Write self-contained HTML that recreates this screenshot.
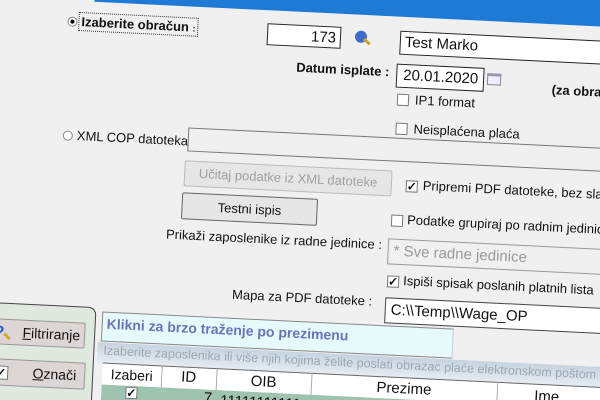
<!DOCTYPE html>
<html><head><meta charset="utf-8"><style>
html,body{margin:0;padding:0;width:600px;height:400px;overflow:hidden;background:#f0f0f0;}
#clip{position:relative;width:600px;height:400px;overflow:hidden;}
#w{position:absolute;left:-100px;top:-100px;width:800px;height:600px;background:#f0f0f0;transform-origin:400px 300px;transform:rotate(2.8deg);font-family:"Liberation Sans",Arial,sans-serif;font-size:13px;color:#111;}
.a{position:absolute;white-space:nowrap;}
.box{position:absolute;background:#fff;border:1px solid #555;box-sizing:border-box;}
.btn{position:absolute;background:#e6e6e6;border:1px solid #8a8a8a;box-sizing:border-box;text-align:center;border-radius:2px;}
.cb{position:absolute;width:12px;height:12px;border:1px solid #777;background:#fff;box-sizing:border-box;font-size:12px;line-height:10px;text-align:center;font-weight:bold;}
.rd{position:absolute;width:10px;height:10px;border-radius:50%;border:1px solid #888;background:#fff;box-sizing:border-box;}
</style></head><body><div id="clip"><div id="w">
<div class="a" style="left:185px;top:60px;width:700px;height:52px;background:#1f7ad6;"></div>
<div class="rd" style="left:159px;top:128px;"><div style="position:absolute;left:2px;top:2px;width:4px;height:4px;border-radius:50%;background:#000"></div></div>
<div class="a" style="left:170px;top:123px;border:1px dotted #333;padding:1px 2px;font-weight:bold;font-size:13px;">Izaberite obračun <span style="font-size:9px">:</span></div>
<div class="box" style="left:359px;top:125px;width:74px;height:22px;text-align:right;padding:2px 4px;font-size:15px;border-color:#222">173</div>
<div class="a" style="left:447px;top:128px;width:12px;height:12px;border-radius:50%;background:#3d6bd0;"></div>
<div class="a" style="left:455px;top:137px;width:8px;height:3px;background:#c9a233;transform:rotate(40deg)"></div>
<div class="box" style="left:492px;top:126px;width:260px;height:24px;padding:2px 4px;font-size:15px;border-color:#222">Test Marko</div>
<div class="a" style="left:380px;top:160px;width:103px;text-align:right;font-weight:bold;">Datum isplate :</div>
<div class="box" style="left:490px;top:159px;width:88px;height:24px;padding:2px 6px;font-size:15px;border-color:#222">20.01.2020</div>
<div class="a" style="left:581px;top:164px;width:14px;height:12px;border:1px solid #889;background:#eef;box-sizing:border-box;border-top:3px solid #99a;"></div>
<div class="a" style="left:646px;top:170px;font-weight:bold;">(za obračun</div>
<div class="cb" style="left:492px;top:189px;"></div>
<div class="a" style="left:510px;top:187px;">IP1 format</div>
<div class="cb" style="left:492px;top:218px;"></div>
<div class="a" style="left:510px;top:216px;">Neisplaćena plaća</div>
<div class="rd" style="left:160px;top:242px;"></div>
<div class="a" style="left:174px;top:239px;">XML COP datoteka</div>
<div class="box" style="left:285px;top:233px;width:520px;height:24px;background:#f0f0f0;border-color:#777"></div>
<div class="btn" style="left:283px;top:266px;width:208px;height:26px;line-height:24px;color:#a0a0a0;border-color:#bbb">Učitaj podatke iz XML datoteke</div>
<div class="cb" style="left:505px;top:275px;">✓</div>
<div class="a" style="left:522px;top:272px;">Pripremi PDF datoteke, bez slanja</div>
<div class="btn" style="left:282px;top:298px;width:136px;height:27px;line-height:25px;border-color:#666">Testni ispis</div>
<div class="cb" style="left:492px;top:310px;"></div>
<div class="a" style="left:508px;top:307px;">Podatke grupiraj po radnim jedinicama</div>
<div class="a" style="left:264px;top:333px;width:220px;text-align:right;">Prikaži zaposlenike iz radne jedinice :</div>
<div class="box" style="left:490px;top:334px;width:260px;height:26px;background:#f0f0f0;border-color:#999;color:#999;padding:3px 5px;font-size:15px;">* Sve radne jedinice</div>
<div class="cb" style="left:491px;top:371px;">✓</div>
<div class="a" style="left:507px;top:368px;">Ispiši spisak poslanih platnih lista</div>
<div class="a" style="left:300px;top:390px;width:177px;text-align:right;">Mapa za PDF datoteke :</div>
<div class="box" style="left:490px;top:393px;width:260px;height:26px;padding:3px 5px;font-size:15px;border-color:#444">C:\\Temp\\Wage_OP</div>
<div class="a" style="left:60px;top:417px;width:142px;height:200px;background:#dfe9dd;border:1px solid #444;border-radius:0 8px 0 0;box-sizing:border-box;"></div>
<div class="btn" style="left:88px;top:433px;width:104px;height:26px;line-height:24px;background:#ddd6d4;text-align:right;padding-right:4px;border-color:#999;font-size:14px"><span style="position:absolute;left:12px;top:1px;color:#2d5fc4;font-weight:bold;font-size:17px">?</span><span style="position:absolute;left:21px;top:15px;width:8px;height:3px;background:#d4a937;transform:rotate(45deg)"></span><u>F</u>iltriranje</div>
<div class="btn" style="left:90px;top:473px;width:104px;height:27px;line-height:25px;background:#ddd6d4;text-align:right;padding-right:8px;border-color:#999;font-size:14px"><span class="cb" style="left:12px;top:6px;width:14px;height:14px;line-height:12px;">✓</span><u>O</u>znači</div>
<div class="a" style="left:208px;top:421px;width:352px;height:30px;background:#e6f9fb;border:1px solid #888;border-right-color:#ccc;box-sizing:border-box;color:#6a72c0;font-weight:bold;font-size:14px;padding:3px 4px;">Klikni za brzo traženje po prezimenu</div>
<div class="a" style="left:205px;top:452px;width:600px;height:20px;background:linear-gradient(#c6d3df,#e8eef3);color:#9ea6ae;padding:1px 6px;font-size:12.5px;">Izaberite zaposlenika ili više njih kojima želite poslati obrazac plaće elektronskom poštom</div>
<div class="a" style="left:211px;top:472px;width:600px;height:22px;background:#fff;border-top:1px solid #666;"></div>
<div class="a" style="left:211px;top:472px;width:59px;height:22px;border-right:1px solid #aaa;text-align:center;line-height:22px;font-size:14px">Izaberi</div>
<div class="a" style="left:270px;top:472px;width:55px;height:22px;border-right:1px solid #aaa;text-align:center;line-height:22px;font-size:15px;">ID</div>
<div class="a" style="left:325px;top:472px;width:95px;height:22px;border-right:1px solid #aaa;text-align:center;line-height:24px;font-size:15px;">OIB</div>
<div class="a" style="left:420px;top:472px;width:186px;height:22px;border-right:1px solid #aaa;text-align:center;line-height:24px;font-size:15px;">Prezime</div>
<div class="a" style="left:606px;top:472px;width:100px;height:22px;text-align:center;line-height:26px;font-size:15px;">Ime</div>
<div class="a" style="left:211px;top:494px;width:600px;height:30px;background:#9ec3ae;"></div>
<div class="cb" style="left:235px;top:495px;">✓</div>
<div class="a" style="left:270px;top:494px;width:52px;text-align:right;font-size:15px;">7</div>
<div class="a" style="left:330px;top:496px;font-size:15px;">11111111111</div>
</div></div></body></html>
